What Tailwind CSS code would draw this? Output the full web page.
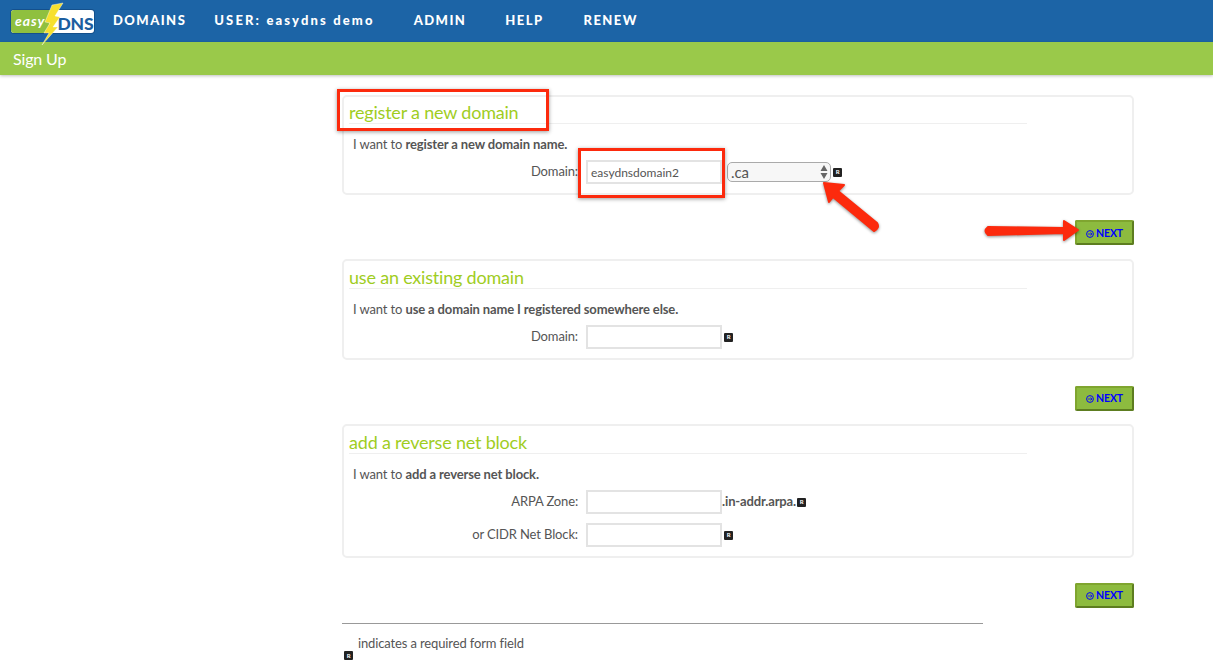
<!DOCTYPE html>
<html lang="en">
<head>
  <meta charset="UTF-8" />
  <title>easyDNS - Sign Up</title>
  <script src="https://cdn.jsdelivr.net/npm/@tailwindcss/browser@4"></script>
</head>
<body class="relative h-[667px] overflow-hidden bg-white font-['Lato','Open_Sans',sans-serif] text-[13px] tracking-[-0.13px] text-[#555]">
  <!-- Top nav -->
  <header class="flex h-[42px] items-center bg-[#1c64a6] pl-[11px]">
    <svg class="mt-[4px] h-[46px] w-[84px] shrink-0 overflow-visible" viewBox="0 0 84 46">
      <rect x="-1" y="9" width="85" height="25" rx="4" fill="#14508c" />
      <rect x="0" y="10" width="83" height="23" rx="3" fill="#fff" />
      <path d="M3 10h38l-4 23H3a3 3 0 0 1-3-3V13a3 3 0 0 1 3-3z" fill="#8fc03f" />
      <text x="4" y="26" font-family="Lato" font-size="14" font-weight="700" font-style="italic" fill="#fff" letter-spacing=".9">easy</text>
      <text x="46.500" y="29.500" font-family="Lato" font-size="17.500" font-weight="900" fill="#1c5ea0" letter-spacing="-.2">DNS</text>
      <path d="M52 3L41 5 34 22l5 1-6 10 5 0-7 12 16-18-5 0 7-10-5-1z" fill="#f7e02f" stroke="#fff" stroke-width=".4" />
    </svg>
    <nav class="ml-[18px] flex font-['Lato'] text-[13px] font-black tracking-[1.45px] text-white">
      <a>DOMAINS</a>
      <a class="ml-[28px] tracking-[2.15px]">USER: easydns demo</a>
      <a class="ml-[39px]">ADMIN</a>
      <a class="ml-[39px]">HELP</a>
      <a class="ml-[40px]">RENEW</a>
    </nav>
  </header>
  <div class="flex h-[33px] items-center bg-[#9ac94a] pl-[13px] text-[16px] tracking-[-0.15px] text-white shadow-[0_1px_3px_rgba(0,0,0,0.25)]">Sign Up</div>

  <main class="ml-[342px] w-[792px] pt-[20px]">
    <!-- Register -->
    <section class="h-[100px] rounded-[5px] border-2 border-[#efefef] px-[5px] pt-[2px]">
      <h2 class="h-[25px] w-[678px] border-b border-[#efefef] text-[18px] leading-[26px] tracking-[-0.2px] text-[#9fcd1f]">register a new domain</h2>
      <p class="mt-[11px] pl-[4px] leading-[18px]">I want to <b>register a new domain name.</b></p>
      <div class="mt-[7px] flex h-[24px] items-center">
        <label class="-ml-[5px] w-[234px] text-right">Domain:</label>
        <input value="easydnsdomain2" class="ml-[8px] h-[24px] w-[136px] border-2 border-[#e3e3e3] px-[3px] text-[12px] tracking-normal text-[#555]" />
        <div class="ml-[5px] flex h-[20px] w-[104px] items-center justify-between rounded-[5px] border border-[#aaa] bg-[#f7f7f7] pl-[3px] pr-[2px] text-[15px]">.ca
          <svg class="h-[14px] w-[8px]" viewBox="0 0 8 14"><path d="M4 0l3.500 6h-7zM4 14L.5 8h7z" fill="#666" /></svg>
        </div>
        <span class="ml-[2px] flex h-[9px] w-[9px] items-center justify-center rounded-[1px] bg-[#222] text-[6px] font-bold leading-none text-white">R</span>
      </div>
    </section>
    <div class="flex h-[64px] justify-end pt-[25px]">
      <button class="flex h-[25px] w-[59px] items-center justify-center gap-[2px] rounded-[2px] border-2 border-[#7fa52f] border-r-[#5d7d20] border-b-[#5d7d20] bg-[#8dbb3f] pt-[2px] text-[10.500px] font-bold text-[#0000ff]">
        <svg class="h-[8px] w-[8px]" viewBox="0 0 8 8"><circle cx="4" cy="4" r="3.400" fill="none" stroke="#0000ff" /><path d="M2 4h4M4.500 2.500L6 4 4.500 5.500" fill="none" stroke="#0000ff" stroke-width=".8" /></svg>NEXT
      </button>
    </div>

    <!-- Existing -->
    <section class="h-[101px] rounded-[5px] border-2 border-[#efefef] px-[5px] pt-[3px]">
      <h2 class="h-[25px] w-[678px] border-b border-[#efefef] text-[18px] leading-[26px] tracking-[-0.2px] text-[#9fcd1f]">use an existing domain</h2>
      <p class="mt-[11px] pl-[4px] leading-[18px]">I want to <b>use a domain name I registered somewhere else.</b></p>
      <div class="mt-[7px] flex h-[24px] items-center">
        <label class="-ml-[5px] w-[234px] text-right">Domain:</label>
        <input class="ml-[8px] h-[24px] w-[136px] border-2 border-[#e3e3e3] px-[3px] text-[12px]" />
        <span class="ml-[2px] flex h-[9px] w-[9px] items-center justify-center rounded-[1px] bg-[#222] text-[6px] font-bold leading-none text-white">R</span>
      </div>
    </section>
    <div class="flex h-[64px] justify-end pt-[26px]">
      <button class="flex h-[25px] w-[59px] items-center justify-center gap-[2px] rounded-[2px] border-2 border-[#7fa52f] border-r-[#5d7d20] border-b-[#5d7d20] bg-[#8dbb3f] pt-[1px] text-[10.500px] font-bold text-[#0000ff]">
        <svg class="h-[8px] w-[8px]" viewBox="0 0 8 8"><circle cx="4" cy="4" r="3.400" fill="none" stroke="#0000ff" /><path d="M2 4h4M4.500 2.500L6 4 4.500 5.500" fill="none" stroke="#0000ff" stroke-width=".8" /></svg>NEXT
      </button>
    </div>

    <!-- Reverse -->
    <section class="h-[134px] rounded-[5px] border-2 border-[#efefef] px-[5px] pt-[3px]">
      <h2 class="h-[25px] w-[678px] border-b border-[#efefef] text-[18px] leading-[26px] tracking-[-0.2px] text-[#9fcd1f]">add a reverse net block</h2>
      <p class="mt-[11px] pl-[4px] leading-[18px]">I want to <b>add a reverse net block.</b></p>
      <div class="mt-[7px] flex h-[24px] items-center">
        <label class="-ml-[5px] w-[234px] text-right">ARPA Zone:</label>
        <input class="ml-[8px] h-[24px] w-[136px] border-2 border-[#e3e3e3] px-[3px] text-[12px]" />
        <b>.in-addr.arpa.</b>
        <span class="ml-[1px] flex h-[9px] w-[9px] items-center justify-center rounded-[1px] bg-[#222] text-[6px] font-bold leading-none text-white">R</span>
      </div>
      <div class="mt-[9px] flex h-[24px] items-center">
        <label class="-ml-[5px] w-[234px] text-right">or CIDR Net Block:</label>
        <input class="ml-[8px] h-[24px] w-[136px] border-2 border-[#e3e3e3] px-[3px] text-[12px]" />
        <span class="ml-[2px] flex h-[9px] w-[9px] items-center justify-center rounded-[1px] bg-[#222] text-[6px] font-bold leading-none text-white">R</span>
      </div>
    </section>
    <div class="flex h-[65px] justify-end pt-[25px]">
      <button class="flex h-[25px] w-[59px] items-center justify-center gap-[2px] rounded-[2px] border-2 border-[#7fa52f] border-r-[#5d7d20] border-b-[#5d7d20] bg-[#8dbb3f] pt-[1px] text-[10.500px] font-bold text-[#0000ff]">
        <svg class="h-[8px] w-[8px]" viewBox="0 0 8 8"><circle cx="4" cy="4" r="3.400" fill="none" stroke="#0000ff" /><path d="M2 4h4M4.500 2.500L6 4 4.500 5.500" fill="none" stroke="#0000ff" stroke-width=".8" /></svg>NEXT
      </button>
    </div>

    <div class="w-[641px] border-t border-[#999] pt-[11px]">
      <div class="flex items-start pl-[2px]">
        <span class="mt-[16px] flex h-[9px] w-[9px] items-center justify-center rounded-[1px] bg-[#222] text-[6px] font-bold leading-none text-white">R</span>
        <span class="ml-[5px] leading-[16px]">indicates a required form field</span>
      </div>
    </div>
  </main>

  <!-- Red annotations drawn over the page -->
  <div class="absolute left-[337px] top-[89px] h-[42px] w-[212px] border-[3px] border-[#fc2a0d] shadow-[0_1px_4px_rgba(0,0,0,0.4)]"></div>
  <div class="absolute left-[578px] top-[148px] h-[50px] w-[147px] border-[3px] border-[#fc2a0d] shadow-[0_1px_4px_rgba(0,0,0,0.4)]"></div>
  <svg class="absolute left-0 top-0 h-[667px] w-[1213px]" viewBox="0 0 1213 667" fill="none">
    <g filter="drop-shadow(0 1px 1.500px rgba(0,0,0,.45))" fill="#fc2a0d" stroke="#fc2a0d" stroke-linejoin="round">
      <path d="M824 183L844 185 838 191 877 223Q880 228 874 231L833 197 829 202z" stroke-width="2" />
      <path d="M988 227L1064 228V221L1078 230 1064 240V233L988 235Q983 231 988 227z" stroke-width="2" />
    </g>
  </svg>
</body>
</html>
